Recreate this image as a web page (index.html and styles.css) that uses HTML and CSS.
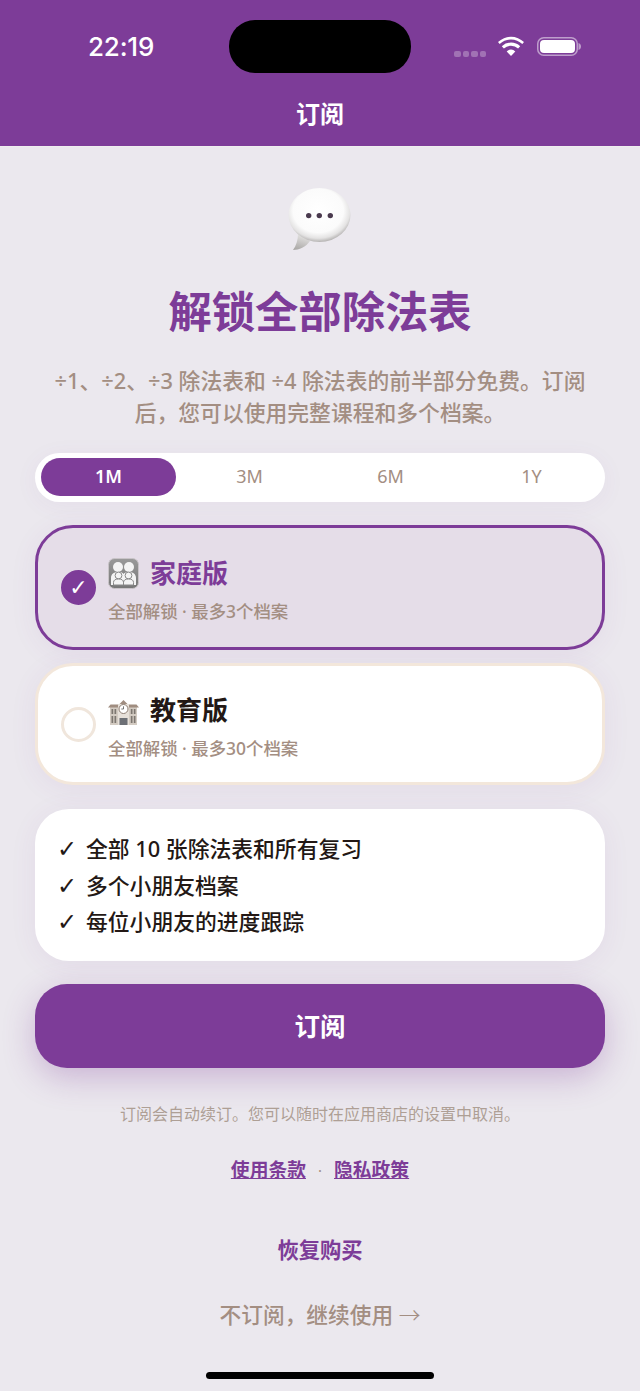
FILE: index.html
```html
<!DOCTYPE html>
<html lang="zh-CN">
<head>
    <meta charset="UTF-8">
    <meta name="viewport" content="width=device-width, initial-scale=1.0">
    <title>订阅</title>
    <link rel="stylesheet" href="styles.css">
</head>
<body>

    <!-- Header com barra de status -->
    <header class="header">
        <div class="status-bar">
            <span class="time">22:19</span>
            <span class="island"></span>
            <div class="status-icons">
                <span class="signal"><i></i><i></i><i></i><i></i></span>
                <svg class="wifi" width="26" height="20" viewBox="0 0 26 20">
                    <path d="M13 20l-4.300-4.600a6 6 0 0 1 8.600 0z" fill="#fff"/>
                    <path d="M5.900 12.600a10 10 0 0 1 14.200 0l2.100-2.300a13.200 13.200 0 0 0-18.400 0z" fill="#fff"/>
                    <path d="M1.700 8.100a16 16 0 0 1 22.600 0l1.700-2A18.600 18.600 0 0 0 0 6.100z" fill="#fff"/>
                </svg>
                <svg class="battery" width="44" height="19" viewBox="0 0 44 19">
                    <rect x="0.750" y="0.750" width="39.500" height="17.500" rx="6" fill="none" stroke="#fff" stroke-opacity=".5" stroke-width="1.500"/>
                    <rect x="3" y="3" width="35" height="13" rx="4" fill="#fff"/>
                    <path d="M41.500 6c1.500.5 2.500 1.800 2.500 3.500s-1 3-2.500 3.500z" fill="#fff" fill-opacity=".5"/>
                </svg>
            </div>
        </div>
        <h2>订阅</h2>
    </header>

    <main class="container">
        <svg class="bubble" width="64" height="63" viewBox="0 0 64 63">
            <defs>
                <radialGradient id="bubbleFill" cx="48%" cy="42%" r="58%">
                    <stop offset="0" stop-color="#ffffff"/>
                    <stop offset=".7" stop-color="#fbfbfb"/>
                    <stop offset=".88" stop-color="#e4e3e3"/>
                    <stop offset="1" stop-color="#b5b3b2"/>
                </radialGradient>
                <linearGradient id="tailFill" x1="0.500" y1="0" x2="0.200" y2="1">
                    <stop offset="0" stop-color="#e6e5e4"/>
                    <stop offset="1" stop-color="#a9a7a5"/>
                </linearGradient>
            </defs>
            <path d="M10 46c0 6-2 12-5 16 6 0 13-3 17-9z" fill="url(#tailFill)"/>
            <ellipse cx="31.500" cy="27" rx="31" ry="27" fill="url(#bubbleFill)"/>
            <circle cx="20.700" cy="27.600" r="2.700" fill="#4a3a4e"/>
            <circle cx="31.300" cy="27.600" r="2.700" fill="#4a3a4e"/>
            <circle cx="42.300" cy="27.600" r="2.700" fill="#4a3a4e"/>
        </svg>

        <h1>解锁全部除法表</h1>
        <p class="intro">÷1、÷2、÷3 除法表和 ÷4 除法表的前半部分免费。订阅后，您可以使用完整课程和多个档案。</p>

        <div class="periods">
            <span class="period active">1M</span>
            <span class="period">3M</span>
            <span class="period">6M</span>
            <span class="period">1Y</span>
        </div>

        <!-- Planos -->
        <div class="plan selected">
            <span class="radio">✓</span>
            <div class="plan-info">
                <div class="plan-title">
                    <svg class="plan-icon" width="31" height="31" viewBox="0 0 31 31">
                        <defs>
                            <linearGradient id="tileFill" x1="0" y1="0" x2="0" y2="1">
                                <stop offset="0" stop-color="#9a9a9a"/>
                                <stop offset="1" stop-color="#777"/>
                            </linearGradient>
                        </defs>
                        <rect x="0.500" y="0.500" width="30" height="30" rx="6" fill="url(#tileFill)" stroke="#c9c4c8"/>
                        <circle cx="10" cy="9" r="5" fill="#f4f4f4"/>
                        <circle cx="21" cy="9" r="5" fill="#f4f4f4"/>
                        <path d="M3 27v-7c0-4 3-6 7-6s5 1 5.500 2c.5-1 2-2 5.500-2 4 0 7 2 7 6v7z" fill="#f4f4f4"/>
                        <circle cx="10.500" cy="17.500" r="3.400" fill="#f4f4f4" stroke="#8a8a8a"/>
                        <circle cx="20.500" cy="17.500" r="3.400" fill="#f4f4f4" stroke="#8a8a8a"/>
                        <path d="M5.500 27v-2.500c0-2.500 2-3.500 5-3.500s5 1 5 3.500V27zM15.500 27v-2.500c0-2.500 2-3.500 5-3.500s5 1 5 3.500V27z" fill="#f4f4f4" stroke="#8a8a8a"/>
                    </svg>
                    <span class="plan-name">家庭版</span>
                </div>
                <div class="plan-desc">全部解锁 · 最多3个档案</div>
            </div>
        </div>

        <div class="plan">
            <span class="radio"></span>
            <div class="plan-info">
                <div class="plan-title">
                    <svg class="plan-icon school" width="31" height="25" viewBox="0 0 31 25">
                        <rect x="2" y="6" width="27" height="19" fill="#d3cbc2"/>
                        <path d="M0 7.500l2.500-3h8.500l4.500-4.500 4.500 4.500h8.500l2.500 3z" fill="#a08d80"/>
                        <rect x="10" y="4" width="11" height="21" fill="#e6e0d9"/>
                        <circle cx="15.500" cy="9" r="4.500" fill="#fff" stroke="#8d7d72"/>
                        <path d="M15.500 6.300v2.700h-2.200" fill="none" stroke="#555" stroke-width=".8"/>
                        <path d="M3.500 9h1.700v5h-1.700zM6.500 9h1.700v5h-1.700zM3.500 16h1.700v7h-1.700zM6.500 16h1.700v7h-1.700zM22.800 9h1.700v5h-1.700zM25.800 9h1.700v5h-1.700zM22.800 16h1.700v7h-1.700zM25.800 16h1.700v7h-1.700z" fill="#7d7770"/>
                        <rect x="11.500" y="18" width="8" height="7" fill="#6c6f75"/>
                    </svg>
                    <span class="plan-name">教育版</span>
                </div>
                <div class="plan-desc">全部解锁 · 最多30个档案</div>
            </div>
        </div>

        <ul class="features">
            <li>全部 10 张除法表和所有复习</li>
            <li>多个小朋友档案</li>
            <li>每位小朋友的进度跟踪</li>
        </ul>

        <button class="subscribe">订阅</button>

        <p class="notice">订阅会自动续订。您可以随时在应用商店的设置中取消。</p>

        <div class="legal">
            <a href="#">使用条款</a>
            <span class="dot">·</span>
            <a href="#">隐私政策</a>
        </div>

        <a class="restore" href="#">恢复购买</a>
        <a class="skip" href="#">不订阅，继续使用 <span class="arrow">→</span></a>
    </main>

    <div class="home-bar"></div>

</body>
</html>
```

FILE: styles.css
```css
body {
    font-family: 'Noto Sans', 'Noto Sans CJK SC', sans-serif;
    background-color: #ebe8ee;
    margin: 0;
    padding: 0;
    height: 1391px;
    overflow: hidden;
    position: relative;
    color: #231815;
}

/* Header */
.header {
    background-color: #7d3c98;
    color: white;
    height: 147px;
    border-bottom: 1px solid #eeeeee;
    box-sizing: border-box;
}
.status-bar {
    display: grid;
    grid-template-columns: 229px 182px 229px;
    padding-top: 20px;
    height: 73px;
    box-sizing: border-box;
}
.time {
    font-family: 'Inter', sans-serif;
    font-size: 26px;
    font-weight: 500;
    line-height: 53px;
    padding-left: 88px;
    letter-spacing: -0.2px;
}
.island {
    background-color: black;
    border-radius: 26px;
    height: 53px;
}
.status-icons {
    display: flex;
    align-items: center;
    height: 53px;
    padding-left: 43px;
}
.signal {
    display: flex;
    gap: 2px;
    margin-top: 14px;
    margin-right: 12px;
}
.signal i {
    width: 6.500px;
    height: 6px;
    border-radius: 2px;
    background-color: rgba(255, 255, 255, 0.28);
}
.wifi {
    margin-right: 13px;
    margin-top: -1px;
}
.battery {
    margin-top: -1px;
}
.header h2 {
    margin: 0;
    font-size: 24px;
    font-weight: 600;
    line-height: 36px;
    margin-top: 23px;
    text-align: center;
}

/* Container principal */
.container {
    display: flex;
    flex-direction: column;
    align-items: center;
    padding: 0 35px;
}
.bubble {
    margin-top: 41px;
}
h1 {
    margin: 31px 0 0;
    font-size: 43.300px;
    font-weight: 700;
    line-height: 60px;
    color: #7d3c98;
}
.intro {
    margin: 23px 0 0;
    width: 546px;
    font-size: 21.800px;
    font-weight: 500;
    line-height: 32px;
    text-align: center;
    color: #a38e82;
}

/* Seletor de período */
.periods {
    display: grid;
    grid-template-columns: repeat(4, 1fr);
    align-items: center;
    width: 100%;
    height: 49px;
    margin-top: 24px;
    padding: 0 3px 2px;
    box-sizing: border-box;
    background-color: white;
    border-radius: 25px;
    box-shadow: 0 4px 24px rgba(125, 60, 152, 0.05);
}
.period {
    height: 38px;
    margin: 0 3px;
    line-height: 37px;
    text-align: center;
    font-size: 18px;
    color: #a38e82;
    border-radius: 19px;
}
.period.active {
    background-color: #7d3c98;
    color: white;
    font-weight: 600;
}

/* Planos */
.plan {
    display: flex;
    align-items: center;
    gap: 12px;
    width: 100%;
    height: 122px;
    margin-top: 13px;
    padding: 0 23px;
    box-sizing: border-box;
    background-color: white;
    border: 3px solid #f3e7db;
    border-radius: 38px;
    box-shadow: 0 4px 28px rgba(125, 60, 152, 0.07);
}
.plan.selected {
    height: 125px;
    margin-top: 23px;
    background-color: #e5dde8;
    border-color: #7d3c98;
}
.radio {
    flex: none;
    width: 35px;
    height: 35px;
    box-sizing: border-box;
    border: 3px solid #f0e6dc;
    border-radius: 50%;
    text-align: center;
    color: white;
    font-family: 'DejaVu Sans', sans-serif;
    font-size: 22px;
    line-height: 29px;
}
.selected .radio {
    background-color: #7d3c98;
    border-color: #7d3c98;
}
.plan-info {
    padding-top: 4px;
}
.plan-title {
    display: flex;
    align-items: center;
    gap: 11px;
    height: 36px;
}
.plan-icon.school {
    margin-top: 5px;
}
.plan-name {
    font-size: 26px;
    font-weight: 600;
    line-height: 36px;
}
.selected .plan-name {
    color: #7d3c98;
}
.plan-desc {
    margin-top: 7px;
    font-size: 17.400px;
    font-weight: 500;
    line-height: 26px;
    color: #a38e82;
}

/* Lista de recursos */
.features {
    list-style: none;
    width: 100%;
    height: 152px;
    margin: 24px 0 0;
    padding: 22px 22px 0;
    box-sizing: border-box;
    background-color: white;
    border-radius: 34px;
    box-shadow: 0 4px 28px rgba(125, 60, 152, 0.07);
}
.features li {
    display: flex;
    gap: 10px;
    height: 36.500px;
    line-height: 36.500px;
    font-size: 21.800px;
    font-weight: 500;
}
.features li::before {
    content: '✓';
    font-family: 'DejaVu Sans', sans-serif;
    font-size: 24px;
    width: 19px;
}

/* Botão */
.subscribe {
    flex: none;
    width: 100%;
    height: 84px;
    margin-top: 23px;
    padding: 0 0 4px;
    border: none;
    border-radius: 32px;
    background-color: #7d3c98;
    color: white;
    font-family: inherit;
    font-size: 25.500px;
    font-weight: 600;
    box-shadow: 0 10px 32px rgba(125, 60, 152, 0.3);
}

/* Rodapé */
.notice {
    margin: 34px 0 0;
    font-size: 16px;
    line-height: 24px;
    color: #ae9f95;
}
.legal {
    display: flex;
    align-items: center;
    gap: 12px;
    margin-top: 30px;
    line-height: 28px;
}
.legal a {
    font-size: 18.800px;
    font-weight: 600;
    color: #7d3c98;
}
.dot {
    color: #a38e82;
    font-size: 15px;
}
.restore {
    margin-top: 51px;
    font-size: 21.300px;
    font-weight: 600;
    line-height: 30px;
    color: #7d3c98;
    text-decoration: none;
}
.skip {
    margin-top: 34px;
    font-size: 21.700px;
    font-weight: 500;
    line-height: 32px;
    color: #a38e82;
    text-decoration: none;
}
.arrow {
    font-weight: 300;
}

/* Indicador inferior */
.home-bar {
    position: absolute;
    left: 206px;
    bottom: 12px;
    width: 228px;
    height: 7px;
    border-radius: 4px;
    background-color: black;
}
```
